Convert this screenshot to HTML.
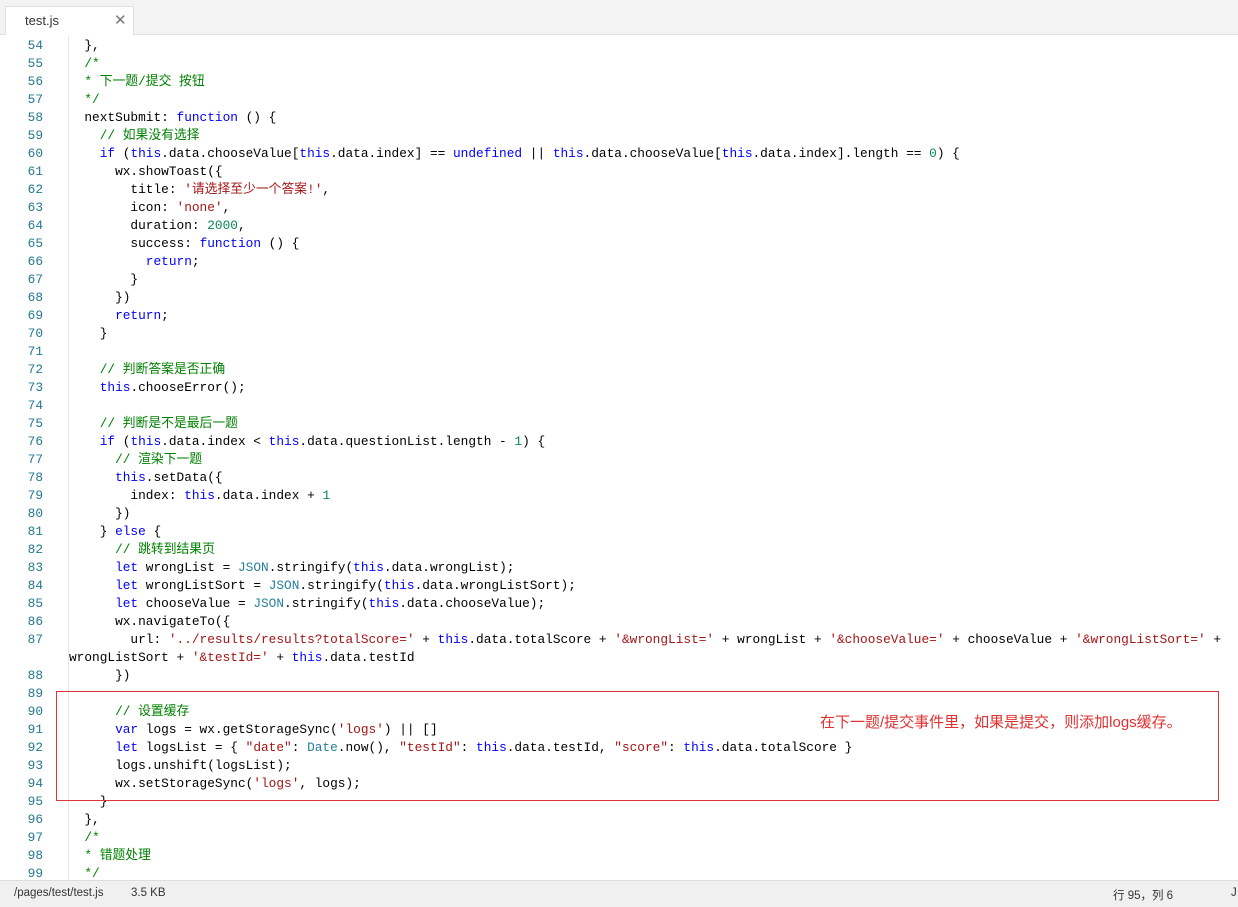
<!DOCTYPE html>
<html><head><meta charset="utf-8"><style>
body{margin:0;width:1238px;height:906px;overflow:hidden;background:#fff;position:relative;font-family:"Liberation Sans","Noto Sans CJK SC",sans-serif}
.top{position:absolute;left:0;top:0;width:1238px;height:34px;background:#f3f3f3;border-bottom:1px solid #e0e0e0}
.tab{position:absolute;left:5px;top:6px;width:129px;height:29px;background:#fff;border:1px solid #e0e0e0;border-bottom:none;box-sizing:border-box}
.tab .n{position:absolute;left:19px;top:6px;font-size:13px;color:#333}
.tab .x{position:absolute;left:108px;top:4px;font-size:15px;color:#777}
.gut{position:absolute;left:5px;top:35px;width:63px;height:845px;border-right:1px solid #e8e8e8}
.code{position:absolute;left:0;top:37px;width:1238px;height:843px;overflow:hidden;font-family:"Liberation Mono","Noto Sans CJK SC",monospace;font-size:12.8px}
.r{height:18px;line-height:18px;position:relative}
.r i{font-style:normal;position:absolute;left:0;width:43px;text-align:right;color:#237893}
.r b{font-weight:normal;position:absolute;left:69px;color:#000;white-space:pre}
.k{color:#0000ff}.s{color:#a31515}.c{color:#008000}.n{color:#098658}.t{color:#267f99}
.box{position:absolute;left:56px;top:691px;width:1163px;height:110px;border:1px solid #d9363e;box-sizing:border-box}
.ann{position:absolute;left:820px;top:711px;font-size:15px;color:#e03030}
.st{position:absolute;left:0;top:880px;width:1238px;height:26px;background:#f0f0f0;border-top:1px solid #ddd;font-size:11.5px;color:#333}
.st span{position:absolute;top:6px}
</style></head><body>
<div class="top"><div class="tab"><span class="n">test.js</span><span class="x">✕</span></div></div>
<div class="gut"></div>
<div class="code">
<div class="r"><i>54</i><b>  },</b></div>
<div class="r"><i>55</i><b>  <span class="c">/*</span></b></div>
<div class="r"><i>56</i><b>  <span class="c">* 下一题/提交 按钮</span></b></div>
<div class="r"><i>57</i><b>  <span class="c">*/</span></b></div>
<div class="r"><i>58</i><b>  nextSubmit: <span class="k">function</span> () {</b></div>
<div class="r"><i>59</i><b>    <span class="c">// 如果没有选择</span></b></div>
<div class="r"><i>60</i><b>    <span class="k">if</span> (<span class="k">this</span>.data.chooseValue[<span class="k">this</span>.data.index] == <span class="k">undefined</span> || <span class="k">this</span>.data.chooseValue[<span class="k">this</span>.data.index].length == <span class="n">0</span>) {</b></div>
<div class="r"><i>61</i><b>      wx.showToast({</b></div>
<div class="r"><i>62</i><b>        title: <span class="s">'请选择至少一个答案!'</span>,</b></div>
<div class="r"><i>63</i><b>        icon: <span class="s">'none'</span>,</b></div>
<div class="r"><i>64</i><b>        duration: <span class="n">2000</span>,</b></div>
<div class="r"><i>65</i><b>        success: <span class="k">function</span> () {</b></div>
<div class="r"><i>66</i><b>          <span class="k">return</span>;</b></div>
<div class="r"><i>67</i><b>        }</b></div>
<div class="r"><i>68</i><b>      })</b></div>
<div class="r"><i>69</i><b>      <span class="k">return</span>;</b></div>
<div class="r"><i>70</i><b>    }</b></div>
<div class="r"><i>71</i><b></b></div>
<div class="r"><i>72</i><b>    <span class="c">// 判断答案是否正确</span></b></div>
<div class="r"><i>73</i><b>    <span class="k">this</span>.chooseError();</b></div>
<div class="r"><i>74</i><b></b></div>
<div class="r"><i>75</i><b>    <span class="c">// 判断是不是最后一题</span></b></div>
<div class="r"><i>76</i><b>    <span class="k">if</span> (<span class="k">this</span>.data.index &lt; <span class="k">this</span>.data.questionList.length - <span class="n">1</span>) {</b></div>
<div class="r"><i>77</i><b>      <span class="c">// 渲染下一题</span></b></div>
<div class="r"><i>78</i><b>      <span class="k">this</span>.setData({</b></div>
<div class="r"><i>79</i><b>        index: <span class="k">this</span>.data.index + <span class="n">1</span></b></div>
<div class="r"><i>80</i><b>      })</b></div>
<div class="r"><i>81</i><b>    } <span class="k">else</span> {</b></div>
<div class="r"><i>82</i><b>      <span class="c">// 跳转到结果页</span></b></div>
<div class="r"><i>83</i><b>      <span class="k">let</span> wrongList = <span class="t">JSON</span>.stringify(<span class="k">this</span>.data.wrongList);</b></div>
<div class="r"><i>84</i><b>      <span class="k">let</span> wrongListSort = <span class="t">JSON</span>.stringify(<span class="k">this</span>.data.wrongListSort);</b></div>
<div class="r"><i>85</i><b>      <span class="k">let</span> chooseValue = <span class="t">JSON</span>.stringify(<span class="k">this</span>.data.chooseValue);</b></div>
<div class="r"><i>86</i><b>      wx.navigateTo({</b></div>
<div class="r"><i>87</i><b>        url: <span class="s">'../results/results?totalScore='</span> + <span class="k">this</span>.data.totalScore + <span class="s">'&amp;wrongList='</span> + wrongList + <span class="s">'&amp;chooseValue='</span> + chooseValue + <span class="s">'&amp;wrongListSort='</span> +</b></div>
<div class="r"><b>wrongListSort + <span class="s">'&amp;testId='</span> + <span class="k">this</span>.data.testId</b></div>
<div class="r"><i>88</i><b>      })</b></div>
<div class="r"><i>89</i><b></b></div>
<div class="r"><i>90</i><b>      <span class="c">// 设置缓存</span></b></div>
<div class="r"><i>91</i><b>      <span class="k">var</span> logs = wx.getStorageSync(<span class="s">'logs'</span>) || []</b></div>
<div class="r"><i>92</i><b>      <span class="k">let</span> logsList = { <span class="s">"date"</span>: <span class="t">Date</span>.now(), <span class="s">"testId"</span>: <span class="k">this</span>.data.testId, <span class="s">"score"</span>: <span class="k">this</span>.data.totalScore }</b></div>
<div class="r"><i>93</i><b>      logs.unshift(logsList);</b></div>
<div class="r"><i>94</i><b>      wx.setStorageSync(<span class="s">'logs'</span>, logs);</b></div>
<div class="r"><i>95</i><b>    }</b></div>
<div class="r"><i>96</i><b>  },</b></div>
<div class="r"><i>97</i><b>  <span class="c">/*</span></b></div>
<div class="r"><i>98</i><b>  <span class="c">* 错题处理</span></b></div>
<div class="r"><i>99</i><b>  <span class="c">*/</span></b></div>
</div>
<div class="box"></div>
<div class="ann">在下一题/提交事件里，如果是提交，则添加logs缓存。</div>
<div class="st"><span style="left:14px">/pages/test/test.js</span><span style="left:131px">3.5 KB</span><span style="left:1113px">行 95，列 6</span><span style="left:1231px">J</span></div>
</body></html>
